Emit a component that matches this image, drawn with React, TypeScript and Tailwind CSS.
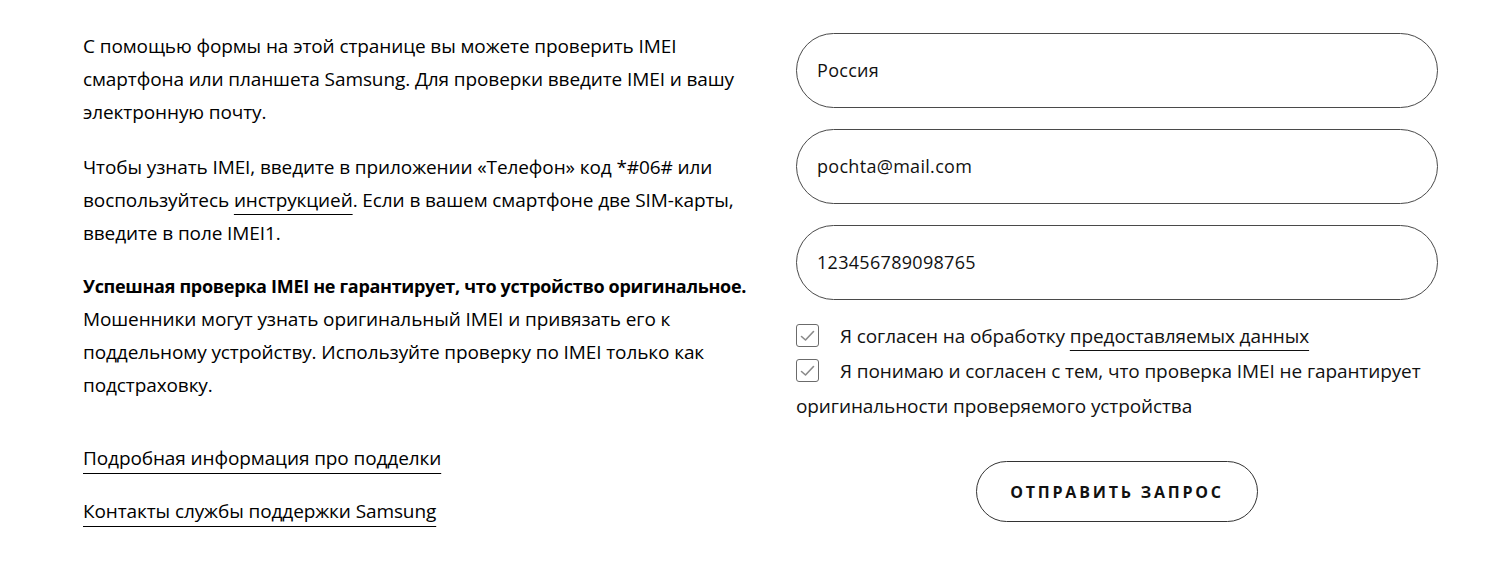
import React from "react";

const font = { fontFamily: '"Open Sans", "Noto Sans", sans-serif' };

function Check() {
  return (
    <span className="mr-[21px] inline-flex h-[23px] w-[23px] -translate-y-[2px] items-center justify-center rounded-[3px] border border-[#6b6b6b] align-middle">
      <svg width="15" height="12" viewBox="0 0 15 12" fill="none">
        <path d="M1.5 6.5 L5.5 10 L13.5 1.5" stroke="#8a8a8a" strokeWidth="1.6" strokeLinecap="round" strokeLinejoin="round" />
      </svg>
    </span>
  );
}

function Field({ value }: { value: string }) {
  return (
    <div className="flex h-[75px] items-center rounded-full border border-[#4a4a4a] px-[20px] text-[18px] tracking-[0.3px] text-[#111]">
      {value}
    </div>
  );
}

export default function App() {
  return (
    <div className="h-[570px] w-[1500px] overflow-hidden bg-white text-black" style={font}>
      <div className="flex pt-[30px]">
        <div className="ml-[83px] w-[713px] text-[19px] leading-[33px] tracking-[-0.1px]">
          <p>
            С помощью формы на этой странице вы можете проверить IMEI
            <br />
            смартфона или планшета Samsung. Для проверки введите IMEI и вашу
            <br />
            электронную почту.
          </p>
          <p className="mt-[22px]">
            Чтобы узнать IMEI, введите в приложении «Телефон» код *#06# или
            <br />
            воспользуйтесь{" "}
            <span className="underline decoration-1 underline-offset-[7px]">инструкцией</span>. Если в вашем смартфоне две SIM-карты,
            <br />
            введите в поле IMEI1.
          </p>
          <p className="mt-[20px] leading-[33px]">
            <span className="text-[18px] font-bold tracking-[-0.3px]">Успешная проверка IMEI не гарантирует, что устройство оригинальное.</span>
            <br />
            Мошенники могут узнать оригинальный IMEI и привязать его к
            <br />
            поддельному устройству. Используйте проверку по IMEI только как
            <br />
            подстраховку.
          </p>
          <div className="mt-[40px] flex flex-col items-start gap-[20px]">
            <span className="underline decoration-1 underline-offset-[8px]">Подробная информация про подделки</span>
            <span className="underline decoration-1 underline-offset-[8px]">Контакты службы поддержки Samsung</span>
          </div>
        </div>
        <div className="w-[642px] pt-[3px]">
          <div className="flex flex-col gap-[21px]">
            <Field value="Россия" />
            <Field value="pochta@mail.com" />
            <Field value="123456789098765" />
          </div>
          <div className="mt-[19px] text-[19px] leading-[35px] tracking-[-0.1px] text-[#111]">
            <div>
              <Check />
              Я согласен на обработку{" "}
              <span className="underline decoration-1 underline-offset-[7px]">предоставляемых данных</span>
            </div>
            <div>
              <Check />
              Я понимаю и согласен с тем, что проверка IMEI не гарантирует
              <br />
              оригинальности проверяемого устройства
            </div>
          </div>
          <div className="mt-[37px] flex justify-center">
            <button className="h-[61px] w-[282px] rounded-full border border-[#333] bg-white text-[16px] font-bold tracking-[2.8px] text-[#111]">
              ОТПРАВИТЬ ЗАПРОС
            </button>
          </div>
        </div>
      </div>
    </div>
  );
}
